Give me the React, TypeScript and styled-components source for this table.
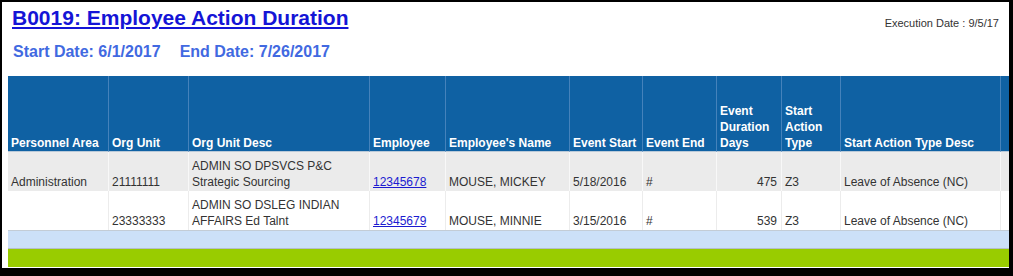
import React from "react";
import styled, { createGlobalStyle } from "styled-components";

const Global = createGlobalStyle`
  html, body { margin: 0; padding: 0; background: #000; }
  body { font-family: "Liberation Sans", Arial, sans-serif; }
`;

const Panel = styled.div`
  box-sizing: border-box;
  margin: 2px 4px 8px 2px;
  width: 1007px;
  height: 266px;
  background: #fff;
  padding: 4px 0 0 6px;
  overflow: hidden;
`;

const TopBar = styled.div`
  display: flex;
  justify-content: space-between;
  align-items: flex-start;
  padding-right: 10px;
`;

const Title = styled.a`
  display: block;
  margin-left: 4px;
  font-size: 21px;
  line-height: 24px;
  font-weight: bold;
  color: #1414d6;
  text-decoration: underline;
`;

const ExecDate = styled.div`
  margin-top: 10px;
  font-size: 11px;
  line-height: 14px;
  color: #333;
`;

const DateLine = styled.div`
  display: flex;
  gap: 19px;
  margin: 12px 0 0 5px;
  font-size: 16px;
  line-height: 20px;
  font-weight: bold;
  color: #4169e1;
`;

const Grid = styled.div`
  display: grid;
  grid-template-columns: 101px 80px 181px 76px 124px 73px 74px 65px 59px 160px 60px;
  margin-top: 14px;
  width: max-content;
  font-size: 12px;
`;

const HeadCell = styled.div`
  box-sizing: border-box;
  height: 76px;
  display: flex;
  align-items: flex-end;
  padding: 0 3px 0 3px;
  background: #0f61a3;
  color: #fff;
  font-weight: bold;
  line-height: 16px;
  border-right: 1px solid #4582bb;
  border-bottom: 1px solid #b9c9d8;
`;

const Cell = styled.div<{ $shade?: boolean; $right?: boolean }>`
  box-sizing: border-box;
  height: 39px;
  display: flex;
  align-items: flex-end;
  justify-content: ${(p) => (p.$right ? "flex-end" : "flex-start")};
  padding: 0 4px 1px 3px;
  background: ${(p) => (p.$shade ? "#ebebeb" : "#fff")};
  color: #333;
  line-height: 16px;
  border-right: 1px solid ${(p) => (p.$shade ? "#f8f8f8" : "#ececec")};
`;

const LastDataRowSpacer = styled.div`
  grid-column: 1 / -1;
  height: 1px;
  background: #c3ccd6;
`;

const SubtotalBar = styled.div`
  grid-column: 1 / -1;
  height: 18px;
  background: #cce0f8;
  border-bottom: 1px solid #b5bfc8;
  box-sizing: border-box;
`;

const GreenBar = styled.div`
  grid-column: 1 / -1;
  height: 18px;
  background: #99cc00;
`;

const Link = styled.a`
  color: #1b1bd0;
  text-decoration: underline;
`;

const headers = [
  "Personnel Area",
  "Org Unit",
  "Org Unit Desc",
  "Employee",
  "Employee's Name",
  "Event Start",
  "Event End",
  "Event Duration Days",
  "Start Action Type",
  "Start Action Type Desc",
  "",
];

const rows = [
  {
    area: "Administration",
    unit: "21111111",
    desc: ["ADMIN SO DPSVCS P&C", "Strategic Sourcing"],
    emp: "12345678",
    name: "MOUSE, MICKEY",
    start: "5/18/2016",
    end: "#",
    days: "475",
    type: "Z3",
    typeDesc: "Leave of Absence (NC)",
  },
  {
    area: "",
    unit: "23333333",
    desc: ["ADMIN SO DSLEG INDIAN", "AFFAIRS Ed Talnt"],
    emp: "12345679",
    name: "MOUSE, MINNIE",
    start: "3/15/2016",
    end: "#",
    days: "539",
    type: "Z3",
    typeDesc: "Leave of Absence (NC)",
  },
];

export default function App() {
  return (
    <>
      <Global />
      <Panel>
        <TopBar>
          <Title href="#">B0019: Employee Action Duration</Title>
          <ExecDate>Execution Date : 9/5/17</ExecDate>
        </TopBar>
        <DateLine>
          <span>Start Date: 6/1/2017</span>
          <span>End Date: 7/26/2017</span>
        </DateLine>
        <Grid>
          {headers.map((h, i) => (
            <HeadCell key={i}>
              {h === "Event Duration Days" ? (
                <span>
                  Event
                  <br />
                  Duration
                  <br />
                  Days
                </span>
              ) : h === "Start Action Type" ? (
                <span>
                  Start
                  <br />
                  Action
                  <br />
                  Type
                </span>
              ) : (
                h
              )}
            </HeadCell>
          ))}
          {rows.map((r, i) => {
            const shade = i === 0;
            return (
              <React.Fragment key={i}>
                <Cell $shade={shade}>{r.area}</Cell>
                <Cell $shade={shade}>{r.unit}</Cell>
                <Cell $shade={shade}>
                  <span>
                    {r.desc[0]}
                    <br />
                    {r.desc[1]}
                  </span>
                </Cell>
                <Cell $shade={shade}>
                  <Link href="#">{r.emp}</Link>
                </Cell>
                <Cell $shade={shade}>{r.name}</Cell>
                <Cell $shade={shade}>{r.start}</Cell>
                <Cell $shade={shade}>{r.end}</Cell>
                <Cell $shade={shade} $right>
                  {r.days}
                </Cell>
                <Cell $shade={shade}>{r.type}</Cell>
                <Cell $shade={shade}>{r.typeDesc}</Cell>
                <Cell $shade={shade} />
              </React.Fragment>
            );
          })}
          <LastDataRowSpacer />
          <SubtotalBar />
          <GreenBar />
        </Grid>
      </Panel>
    </>
  );
}
